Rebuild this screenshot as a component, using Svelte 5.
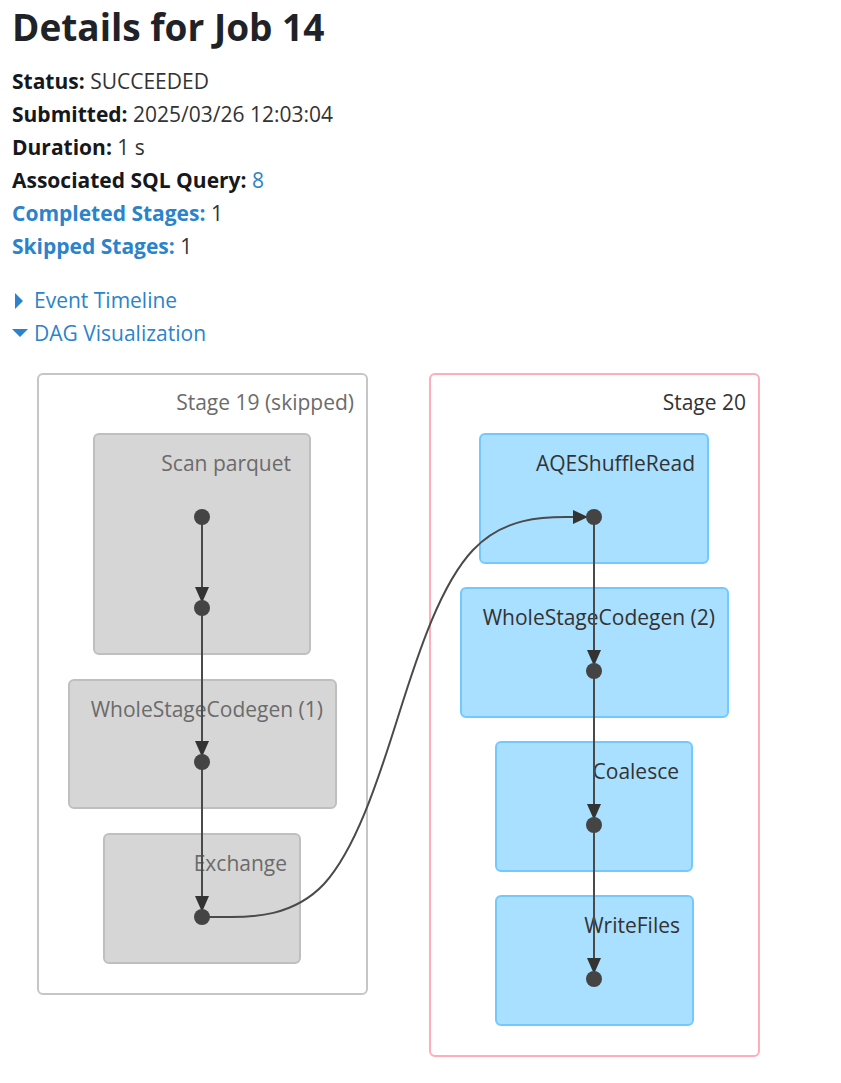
<script>
  let timelineOpen = $state(false);
  let dagOpen = $state(true);

  const stages = [
    {
      id: 19,
      label: 'Stage 19 (skipped)',
      skipped: true,
      x: 38, y: 24, w: 329, h: 620,
      clusters: [
        { label: 'Scan parquet', x: 94, y: 84, w: 216, h: 220 },
        { label: 'WholeStageCodegen (1)', x: 69, y: 330, w: 267, h: 128 },
        { label: 'Exchange', x: 104, y: 484, w: 196, h: 129 }
      ],
      cx: 202,
      nodes: [167, 258, 412, 567]
    },
    {
      id: 20,
      label: 'Stage 20',
      skipped: false,
      x: 430, y: 24, w: 329, h: 682,
      clusters: [
        { label: 'AQEShuffleRead', x: 480, y: 84, w: 228, h: 129 },
        { label: 'WholeStageCodegen (2)', x: 461, y: 238, w: 267, h: 129 },
        { label: 'Coalesce', x: 496, y: 392, w: 196, h: 129 },
        { label: 'WriteFiles', x: 496, y: 546, w: 197, h: 129 }
      ],
      cx: 594,
      nodes: [167, 321, 475, 629]
    }
  ];
</script>

<main>
  <header>
    <h1>Details for Job 14</h1>
    <ul>
      <li><strong>Status:</strong> SUCCEEDED</li>
      <li><strong>Submitted:</strong> 2025/03/26 12:03:04</li>
      <li><strong>Duration:</strong> 1 s</li>
      <li><strong>Associated SQL Query:</strong> <a href="#query-8">8</a></li>
      <li><a href="#completed"><strong>Completed Stages:</strong></a> 1</li>
      <li><a href="#skipped"><strong>Skipped Stages:</strong></a> 1</li>
    </ul>
    <div class="toggles">
      <button type="button" aria-expanded={timelineOpen} onclick={() => (timelineOpen = !timelineOpen)}>
        <svg class="caret" class:open={timelineOpen} viewBox="0 0 16 16" aria-hidden="true"><path d="M3 0 L11 8 L3 16 Z" /></svg>
        Event Timeline
      </button>
      <button type="button" aria-expanded={dagOpen} onclick={() => (dagOpen = !dagOpen)}>
        <svg class="caret" class:open={dagOpen} viewBox="0 0 16 16" aria-hidden="true"><path d="M3 0 L11 8 L3 16 Z" /></svg>
        DAG Visualization
      </button>
    </div>
  </header>

  {#if dagOpen}
    <svg class="dag" viewBox="0 0 841 728" role="img" aria-label="DAG Visualization">
      {#each stages as s (s.id)}
        <g class="stage" class:skipped={s.skipped}>
          <rect class="frame" x={s.x} y={s.y} width={s.w} height={s.h} rx="5" />
          <text x={s.x + s.w - 13} y={s.y + 36}>{s.label}</text>
          {#each s.clusters as c (c.label)}
            <rect class="cluster" x={c.x} y={c.y} width={c.w} height={c.h} rx="5" />
            <text x={c.label === 'Scan parquet' ? c.x + c.w - 19 : c.x + c.w - 13} y={c.y + 37}>{c.label}</text>
          {/each}
        </g>
      {/each}

      <path class="edge" d="M202 567 H231 C251 567 293 567 324 534 C355 500 377 434 398 367 C419 300 441 234 473 200 C504 167 545 167 566 167 H580" />
      <path class="arrow" d="M573 160 L588 167 L573 174 Z" />

      {#each stages as s (s.id)}
        {#each s.nodes as y, i}
          {#if i > 0}
            <path class="edge" d="M{s.cx} {s.nodes[i - 1]} V{y - 16}" />
            <path class="arrow" d="M{s.cx - 7} {y - 21} H{s.cx + 7} L{s.cx} {y - 5} Z" />
          {/if}
        {/each}
        {#each s.nodes as y}
          <circle cx={s.cx} cy={y} r="8" />
        {/each}
      {/each}
    </svg>
  {/if}
</main>

<style>
  :global(body) {
    margin: 0;
    background: #fff;
  }

  main {
    font-family: "Open Sans", "Noto Sans", sans-serif;
    font-size: 21px;
    line-height: 33px;
    color: #333;
  }

  header {
    padding: 5px 12px 0;
  }

  h1 {
    margin: 0 0 16px;
    font-size: 37px;
    line-height: 44px;
    font-weight: 700;
    color: #1f2328;
  }

  ul {
    margin: 0 0 21px;
    padding: 0;
    list-style: none;
  }

  strong {
    font-weight: 700;
  }

  li > strong {
    color: #15181c;
  }

  a {
    color: #2b83cb;
    text-decoration: none;
  }

  .toggles {
    display: flex;
    flex-direction: column;
    align-items: flex-start;
  }

  button {
    display: flex;
    align-items: center;
    gap: 6px;
    padding: 0;
    border: 0;
    background: none;
    font: inherit;
    color: #2b83cb;
    cursor: pointer;
  }

  .caret {
    width: 16px;
    height: 16px;
    fill: #2b83cb;
  }

  .caret.open {
    transform: rotate(90deg);
  }

  .dag {
    display: block;
    width: 100%;
  }

  .dag text {
    font-size: 21px;
    text-anchor: end;
    fill: #333;
  }

  .frame {
    fill: #fff;
    stroke: #ffacbb;
    stroke-width: 2;
  }

  .cluster {
    fill: #a9dfff;
    stroke: #73c9ff;
    stroke-width: 2;
  }

  .skipped text {
    fill: #6b6b6b;
  }

  .skipped .frame {
    stroke: #c6c6c6;
  }

  .skipped .cluster {
    fill: #d6d6d6;
    stroke: #bfbfbf;
  }

  .edge {
    fill: none;
    stroke: #4a4a4a;
    stroke-width: 2;
  }

  .arrow {
    fill: #333;
  }

  circle {
    fill: #444;
  }
</style>
